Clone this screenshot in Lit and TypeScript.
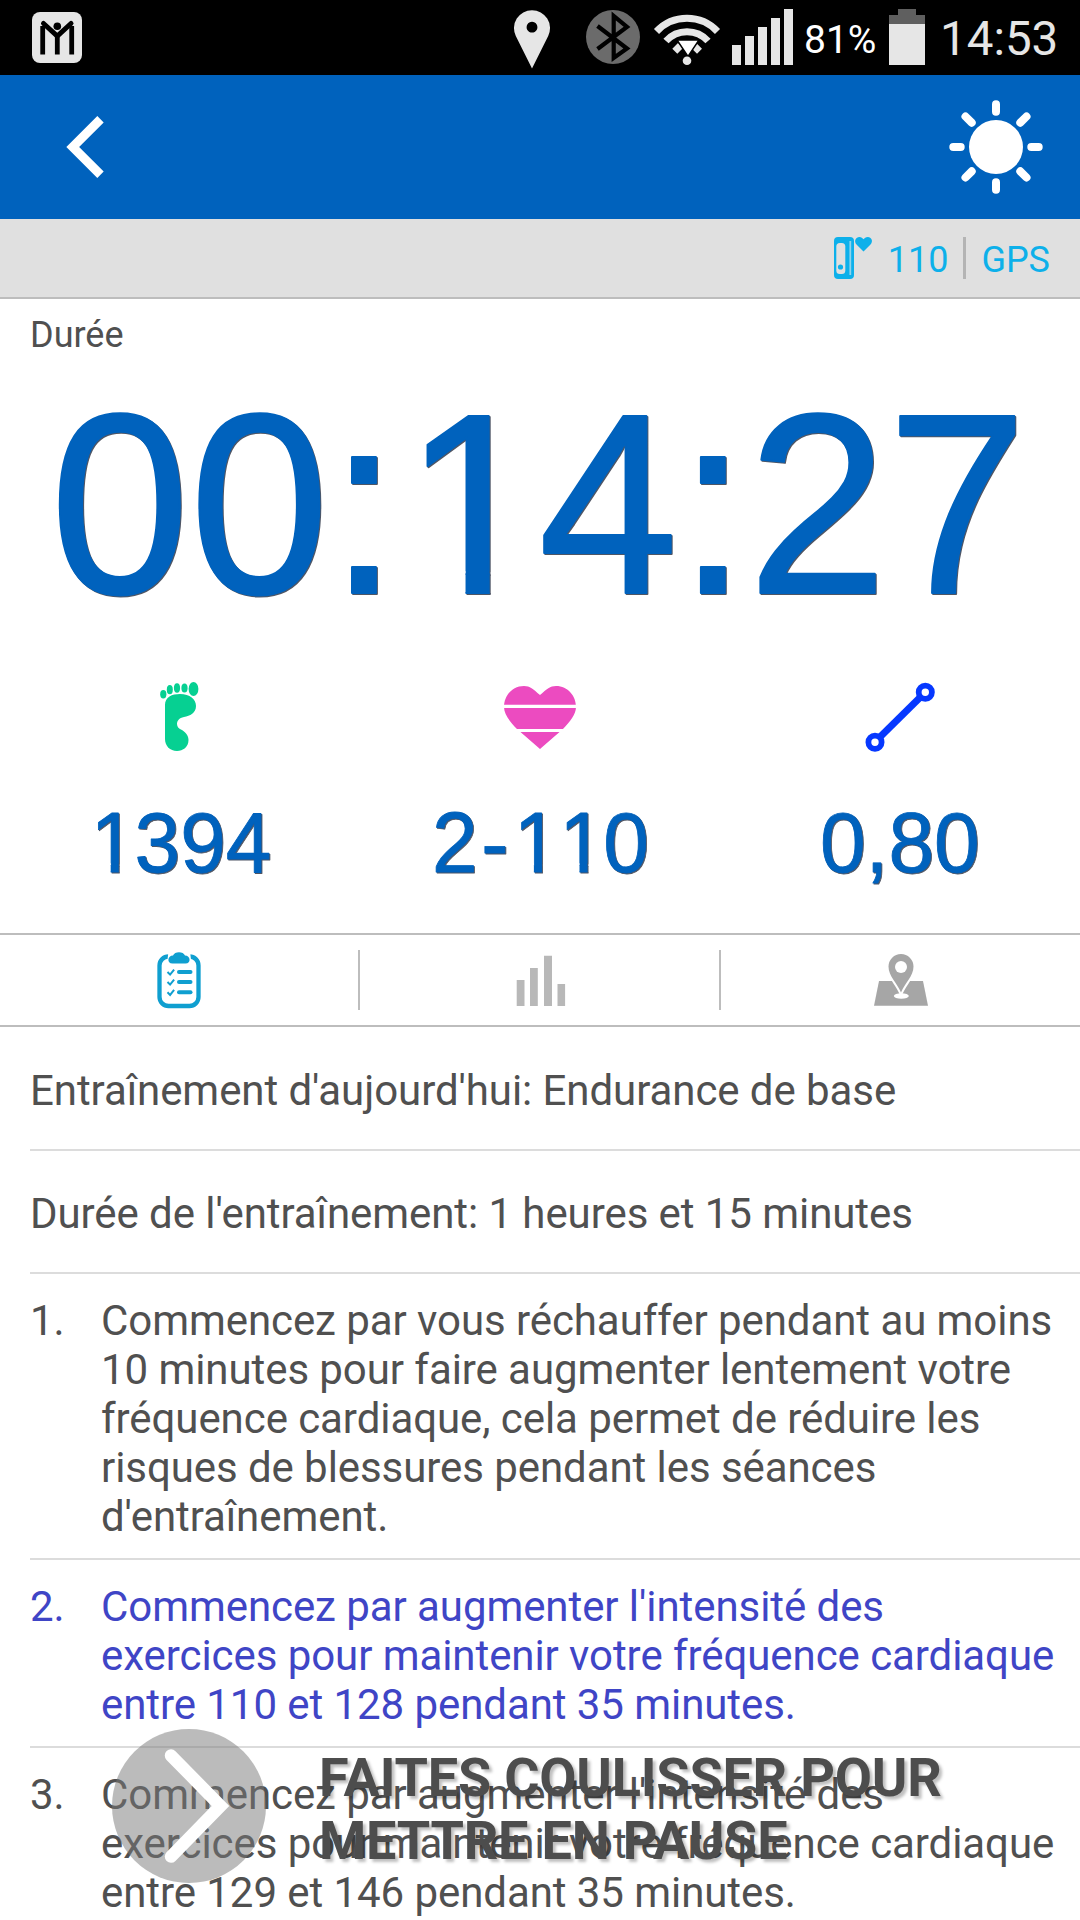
import { LitElement, html, css, svg } from "lit";
import { customElement, property } from "lit/decorators.js";

/** Advance widths of the display digits, in em. */
const ADVANCE: Record<string, number> = { ":": 0.278, ",": 0.278, "-": 0.422 };
const advanceOf = (c: string) => ADVANCE[c] ?? 0.556;

/** Offset of a glyph inside its cell, in em. */
const SHIFT: Record<string, number> = { "1": 0.018, "-": 0.045 };

/** Large numeric read-out with soft corners and a footless "1". */
@customElement("digit-display")
class DigitDisplay extends LitElement {
  @property() value = "";
  @property({ type: Number }) size = 80;
  @property({ type: Number }) height = 90;
  @property({ type: Number }) baseline = 72;
  @property({ type: Number }) stretch = 1.04;
  @property({ type: Number }) outline = 2;

  static styles = css`
    :host { display: block; }
    svg { display: block; overflow: visible; filter: drop-shadow(1px 1px 0.6px rgba(20, 30, 50, 0.75)); }
    text {
      font-family: "Liberation Sans", Arial, sans-serif;
      fill: #0062bd;
      stroke: #0062bd;
      stroke-linejoin: round;
    }
  `;

  render() {
    const s = this.size;
    const o = this.outline / 2;
    const xs: number[] = [];
    let x = 0;
    let holes = "";
    for (const c of this.value) {
      const left = x + (SHIFT[c] ?? 0) * s;
      xs.push(left);
      if (c === "1") {
        const top = -0.0747 * s - o - 1.5;
        const h = 0.14 * s;
        const a = left + 0.2515 * s - o;
        const b = left + 0.3398 * s + o;
        const l = left + 0.05 * s;
        const r = left + 0.53 * s;
        holes += `M${l} ${top}H${a}v${h}H${l}ZM${b} ${top}H${r}v${h}H${b}Z`;
      }
      x += advanceOf(c) * s;
    }
    const frame = `M-20 ${-s * 1.1}H${x + 20}V${s * 0.4}H-20Z`;
    return html`<svg width=${x} height=${this.height}>
      <defs><clipPath id="feet"><path clip-rule="evenodd" d=${frame + holes}></path></clipPath></defs>
      <g transform="translate(0 ${this.baseline}) scale(1 ${this.stretch})">
        <text clip-path="url(#feet)" x=${xs.join(" ")} y="0" font-size=${s} stroke-width=${this.outline}>${this.value}</text>
      </g>
    </svg>`;
  }
}

const steps = [
  {
    text: "Commencez par vous réchauffer pendant au moins 10 minutes pour faire augmenter lentement votre fréquence cardiaque, cela permet de réduire les risques de blessures pendant les séances d'entraînement.",
    active: false,
  },
  {
    text: "Commencez par augmenter l'intensité des exercices pour maintenir votre fréquence cardiaque entre 110 et 128 pendant 35 minutes.",
    active: true,
  },
  {
    text: "Commencez par augmenter l'intensité des exercices pour maintenir votre fréquence cardiaque entre 129 et 146 pendant 35 minutes.",
    active: false,
  },
];

const foot = html`<svg width="72" height="72" viewBox="144 680 72 72" fill="#06d092">
  <path d="M165 705C165 697 172 694 180 694C190 694 196 699 196 706C196 713 190 716 184 717C179 718 177 721 177 724C177 727 179 729 182 730C187 733 188.500 737 188.500 740C188.500 747 183 751 177 751C170 751 165 746 165 739Z"/>
  <ellipse cx="163.300" cy="694.300" rx="3.100" ry="4.200"/><ellipse cx="169.800" cy="689.700" rx="3" ry="4.600"/>
  <ellipse cx="177" cy="688" rx="3.100" ry="4.700"/><ellipse cx="184.500" cy="688" rx="3.100" ry="4.500"/>
  <ellipse cx="193.500" cy="689" rx="4.900" ry="7"/></svg>`;

const heart = html`<svg width="72" height="72" viewBox="504 680 72 72">
  <path fill="#ec4bc0" d="M540 695C533 689 530 686 524 686C512 686 504 696 504 707C504 714 510 722 517 729L540 749L563 729C570 722 576 714 576 707C576 696 568 686 556 686C550 686 547 689 540 695Z"/>
  <path stroke="#fff" stroke-width="3.200" d="M503 706.300H577M503 730.500H577"/></svg>`;

const route = html`<svg width="72" height="72" viewBox="864 680 72 72" fill="none" stroke="#0638ff">
  <path stroke-width="7" d="M880 737L920 697.500"/>
  <circle cx="925.300" cy="692.300" r="6.600" stroke-width="5.800"/><circle cx="875" cy="742.300" r="6.600" stroke-width="5.800"/></svg>`;

const tick = (y: number) => svg`<path fill="none" stroke="#0f9fd0" stroke-width="2" d="M167.500 ${y}l2.600 2.600l4-5"/>
  <path stroke="#0f9fd0" stroke-width="4" stroke-linecap="round" d="M179 ${y}H190.500"/>`;

const clipboard = html`<svg width="60" height="60" viewBox="149 950 60 60">
  <rect x="159.500" y="956.500" width="39" height="49.500" rx="9" fill="none" stroke="#0f9fd0" stroke-width="4.300"/>
  <path fill="#fff" d="M168.500 951H190L191.500 964H167Z"/>
  <path fill="#0f9fd0" d="M172.500 963.500C166.500 963.500 167.500 955.500 173 955.500C174.500 951 183.500 951 185 955.500C190.500 955.500 191.500 963.500 185.500 963.500Z"/>
  ${tick(972)}${tick(982)}${tick(992.3)}</svg>`;

const bars = html`<svg width="60" height="60" viewBox="509 950 60 60" fill="#b8b8b8">
  <path d="M515.700 980h7.800v26h-7.800zM529 968h7.800v38h-7.800zM543 955.700h8v50.300h-8zM556.500 984h7.600v22h-7.600z"/></svg>`;

const mapPin = html`<svg width="60" height="60" viewBox="870 950 60 60">
  <path fill="#a6a6a6" d="M878 981H922L927 1005.700H873Z"/>
  <ellipse cx="900.300" cy="996" rx="7.500" ry="2.800" fill="#fff"/>
  <path fill="#a6a6a6" stroke="#fff" stroke-width="4" paint-order="stroke" d="M900 992.500C896 983 887.500 976 887.500 966.500A12.500 12.500 0 0 1 912.500 966.500C912.500 976 904 983 900 992.500Z"/>
  <circle cx="900" cy="967" r="6" fill="#fff"/></svg>`;

@customElement("app-root")
class AppRoot extends LitElement {
  static styles = css`
    :host {
      display: block;
      position: relative;
      width: 1080px;
      height: 1920px;
      overflow: hidden;
      background: #fff;
      color: #505050;
      font-family: Roboto, "Noto Sans", sans-serif;
    }
    * { box-sizing: border-box; }
    svg { display: block; flex: none; }
    .status {
      display: flex;
      align-items: center;
      height: 75px;
      padding: 0 24px 0 32px;
      background: #000;
      color: #e6e6e6;
    }
    .status .left { flex: 1; }
    .percent { margin-left: 10px; width: 85px; font-size: 39px; line-height: 75px; padding-top: 5px; color: #fff; white-space: nowrap; }
    .clock { font-size: 47.500px; line-height: 75px; padding-top: 4px; margin-left: 15px; width: 116px; white-space: nowrap; }
    .bar {
      display: flex;
      align-items: center;
      justify-content: space-between;
      height: 144px;
      padding: 0 32px 0 60px;
      background: #0062bd;
    }
    .sensors {
      display: flex;
      align-items: center;
      justify-content: flex-end;
      height: 80px;
      padding: 0 30px;
      background: #e0e0e0;
      border-bottom: 2px solid #bdbdbd;
      color: #0db0ea;
      font-size: 36px;
    }
    .sensors .text { padding-top: 4px; }
    .sensors .bpm { margin-left: 14px; }
    .sensors .sep { width: 3px; height: 42px; margin: 0 15px; background: #b4b4b4; }
    .summary { height: 634px; }
    .label { height: 81px; padding: 14px 30px 0; font-size: 36px; line-height: 44px; }
    .timer { display: flex; padding-left: 50px; height: 240px; }
    .stats { display: grid; grid-template-columns: repeat(3, 1fr); padding-top: 60px; }
    .stat { display: flex; flex-direction: column; align-items: center; gap: 48px; }
    .tabs {
      display: grid;
      grid-template-columns: 360px 361px 1fr;
      height: 94px;
      border-top: 2px solid #bdbdbd;
      border-bottom: 2px solid #bdbdbd;
      align-items: center;
    }
    .tab { display: flex; align-items: center; justify-content: center; height: 60px; border-right: 2px solid #bdbdbd; }
    .tab:last-child { border-right: 0; }
    .plan { margin-left: 30px; padding-top: 1px; font-size: 42px; letter-spacing: -0.07px; }
    .line { height: 123px; line-height: 121px; padding-top: 2px; border-bottom: 2px solid #dcdcdc; white-space: nowrap; }
    .step { display: flex; padding: 22px 0 17px; line-height: 49px; border-bottom: 2px solid #dcdcdc; }
    .step .num { width: 71px; flex: none; }
    .step .body { width: 960px; }
    .step.active { color: #3f45c6; }
    .slider { position: absolute; left: 112px; top: 1729px; display: flex; align-items: flex-start; }
    .hint {
      margin: 17px 0 0 53px;
      width: 700px;
      font-size: 54px;
      font-weight: 700;
      line-height: 63px;
      letter-spacing: -0.2px;
      color: #4d4d4d;
      text-shadow: 3px 3px 3px rgba(0, 0, 0, 0.25);
    }
  `;

  render() {
    return html`
      <div class="status">
        <div class="left">
          <svg width="50" height="51" viewBox="32 12 50 51">
            <rect x="32" y="12" width="50" height="51" rx="8" fill="#e6e6e6"/>
            <path d="M42.700 26V54.500M57.300 35V54.500M71.700 26V54.500" stroke="#000" stroke-width="4.800"/>
            <path d="M43.500 23.500L57.300 36L71 23.500" fill="none" stroke="#000" stroke-width="5" stroke-linecap="round"/>
            <circle cx="57.300" cy="26.300" r="3.800"/>
          </svg>
        </div>
        <svg width="284" height="75" viewBox="510 0 284 75">
          <path fill="#e6e6e6" fill-rule="evenodd" d="M532 68.500L515.800 36A18 18 0 1 1 548.200 36ZM532 21.800a5.400 5.400 0 1 0 .01 0Z"/>
          <circle cx="613" cy="37" r="27" fill="#6b6b6b"/>
          <path d="M597.500 26L627 48.500L613.700 58V16L627 27L597.500 49" fill="none" stroke="#000" stroke-width="4.200"/>
          <g fill="none" stroke="#e6e6e6" stroke-width="7">
            <path d="M656.500 31.500A41.800 41.800 0 0 1 717.500 31.500M666 41A28.400 28.400 0 0 1 708 41"/>
            <path d="M674.800 51.300L680.500 45.500M699.500 51.300L693.700 45.500"/>
          </g>
          <path d="M677 40H699L688 56.500Z" fill="#fff" stroke="#000" stroke-width="1.500"/>
          <circle cx="687" cy="60.800" r="4.300" fill="#e6e6e6"/>
          <path fill="#e6e6e6" d="M732 45h9v20h-9zM745 36h9v29h-9zM758 27h9v38h-9zM771 18h9v47h-9zM784 9h9v56h-9z"/>
        </svg>
        <span class="percent">81%</span>
        <svg width="36" height="75" viewBox="889 0 36 75">
          <path fill="#5f5f5f" d="M898 9h18v6h9v9h-36v-9h9z"/><path fill="#e6e6e6" d="M889 24h36v41h-36z"/>
        </svg>
        <span class="clock">14:53</span>
      </div>

      <div class="bar">
        <svg width="50" height="72" viewBox="60 111 50 72"><path d="M100.500 119.200L72.700 147L100.500 174.800" fill="none" stroke="#fff" stroke-width="9"/></svg>
        <svg width="104" height="104" viewBox="-52 -52 104 104" stroke="#fff" stroke-width="8" stroke-linecap="round">
          <circle r="27" fill="#fff" stroke="none"/>
          <path d="M0-42.700V-35.300M0 42.700V35.300M-42.700 0H-35.300M42.700 0H35.300M-30.500-30.500L-24.300-24.300M30.500-30.500L24.300-24.300M-30.500 30.500L-24.300 24.300M30.500 30.500L24.300 24.300"/>
        </svg>
      </div>

      <div class="sensors">
        <svg width="40" height="42" viewBox="835 237 40 42">
          <rect x="835" y="237" width="20" height="42" rx="4" fill="#0db0ea"/>
          <rect x="837.300" y="243" width="9" height="31" rx="3.500" fill="#e0e0e0"/>
          <path d="M851.300 241V275" stroke="#8fd3ec" stroke-width="1.800"/>
          <circle cx="841.500" cy="267" r="2.600" fill="#0db0ea"/>
          <path fill="#0db0ea" d="M864.500 251.500L857.500 244.500C854.500 241 857 237 860.300 237C862.500 237 863.500 238 864.500 239.300C865.500 238 866.700 237 868.900 237C872.200 237 874.700 241 871.500 244.500Z"/>
        </svg>
        <span class="text bpm">110</span>
        <span class="sep"></span>
        <span class="text">GPS</span>
      </div>

      <div class="summary">
        <div class="label">Durée</div>
        <div class="timer">
          <digit-display value="00:14:27" size="251" height="240" baseline="213" stretch="1.025" outline="2"></digit-display>
        </div>
        <div class="stats">
          ${[
            { icon: foot, value: "1394" },
            { icon: heart, value: "2-110" },
            { icon: route, value: "0,80" },
          ].map(
            (s) => html`<div class="stat">
              ${s.icon}
              <digit-display value=${s.value} size="82" height="90" baseline="71.5" stretch="1.035" outline="0.8"></digit-display>
            </div>`
          )}
        </div>
      </div>

      <div class="tabs">
        <div class="tab">${clipboard}</div>
        <div class="tab">${bars}</div>
        <div class="tab">${mapPin}</div>
      </div>

      <div class="plan">
        <div class="line">Entraînement d'aujourd'hui: Endurance de base</div>
        <div class="line">Durée de l'entraînement: 1 heures et 15 minutes</div>
        ${steps.map(
          (s, i) => html`<div class="step ${s.active ? "active" : ""}">
            <span class="num">${i + 1}.</span><span class="body">${s.text}</span>
          </div>`
        )}
      </div>

      <div class="slider">
        <svg width="154" height="154" viewBox="-77 -77 154 154">
          <circle r="77" fill="#777" fill-opacity="0.5"/>
          <path d="M-18-50.500L31.500 0L-18 50.500" fill="none" stroke="#fff" stroke-width="12.500" stroke-linecap="round"/>
        </svg>
        <div class="hint">FAITES COULISSER POUR METTRE EN PAUSE</div>
      </div>
    `;
  }
}
